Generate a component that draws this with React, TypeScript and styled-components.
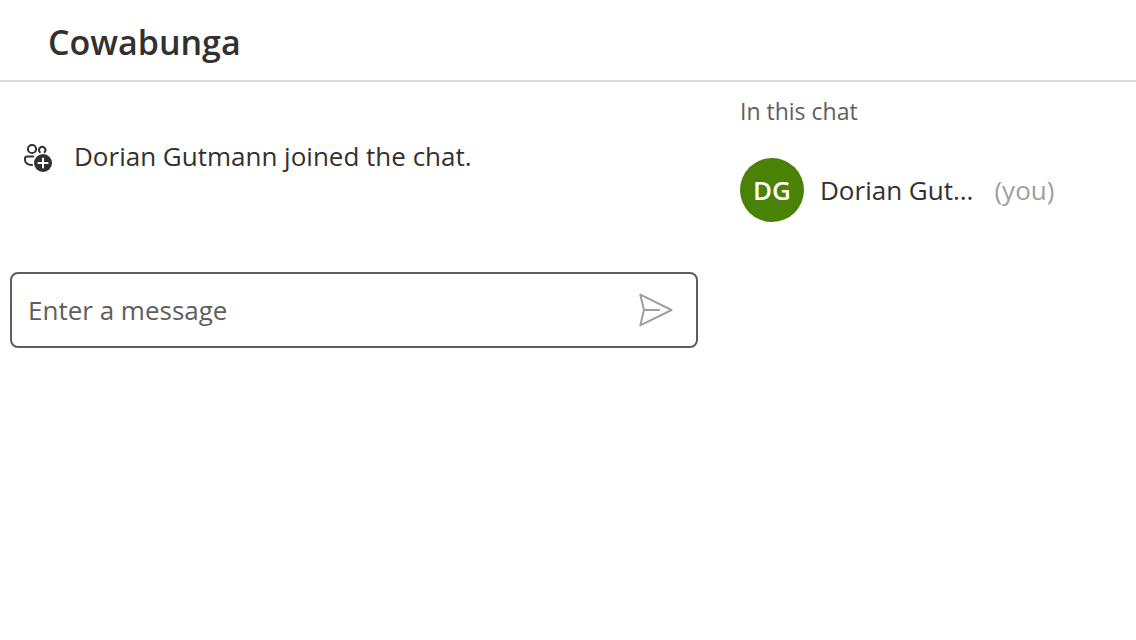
import React, { useState } from 'react';
import styled, { createGlobalStyle } from 'styled-components';

const GlobalStyle = createGlobalStyle`
  *, *::before, *::after {
    box-sizing: border-box;
  }
  body {
    margin: 0;
    background: #ffffff;
    color: #323130;
    font-family: 'Segoe UI', 'Open Sans', 'Noto Sans', sans-serif;
    font-size: 26px;
    line-height: 40px;
  }
`;

const Header = styled.header`
  padding: 18px 48px 14px;
  border-bottom: 2px solid #dcdcdc;
`;

const Title = styled.h1`
  margin: 0;
  font-size: 34px;
  font-weight: 600;
  line-height: 48px;
`;

const Content = styled.div`
  display: flex;
`;

const Conversation = styled.main`
  flex: 1;
  min-width: 0;
  padding: 54px 10px 0;
`;

const SystemMessage = styled.p`
  display: flex;
  align-items: center;
  gap: 22px;
  margin: 0 0 96px;
  padding-left: 14px;
`;

const Composer = styled.form`
  display: flex;
  align-items: center;
  height: 76px;
  padding: 0 18px 0 16px;
  border: 2px solid #605e5c;
  border-radius: 8px;
`;

const MessageInput = styled.input`
  flex: 1;
  min-width: 0;
  padding: 0;
  border: 0;
  outline: 0;
  background: transparent;
  color: #323130;
  font: inherit;

  &::placeholder {
    color: #605e5c;
    opacity: 1;
  }
`;

const SendButton = styled.button`
  display: flex;
  padding: 4px;
  border: 0;
  background: transparent;
  color: #a19f9d;
  cursor: pointer;
`;

const Sidebar = styled.aside`
  width: 428px;
  padding: 13px 32px 0;
`;

const SidebarTitle = styled.h2`
  margin: 0 0 31px;
  color: #605e5c;
  font-size: 23px;
  font-weight: 400;
  line-height: 32px;
`;

const ParticipantList = styled.ul`
  margin: 0;
  padding: 0;
  list-style: none;
`;

const Participant = styled.li`
  display: flex;
  align-items: center;
`;

const Avatar = styled.span`
  display: flex;
  flex: none;
  align-items: center;
  justify-content: center;
  width: 64px;
  height: 64px;
  margin-right: 16px;
  border-radius: 50%;
  background: #498205;
  color: #ffffff;
  font-weight: 600;
`;

const ParticipantName = styled.span`
  margin-right: 21px;
  white-space: nowrap;
`;

const You = styled.span`
  color: #a19f9d;
`;

function PeopleAddIcon() {
  return (
    <svg width="28" height="32" viewBox="0 -4 28 32" fill="none" aria-hidden="true">
      <g stroke="#323130" strokeWidth="2" strokeLinecap="round">
        <circle cx="8" cy="5" r="4.1" />
        <path d="M15.8 8.2A3.2 3.2 0 1 1 20.6 8.2" />
        <path d="M9.2 12.6H3.2Q1 12.6 1 14.8V16Q1.2 20.6 8 21" />
      </g>
      <circle cx="19" cy="19" r="9" fill="#323130" />
      <path d="M19 14.4V23.6M14.4 19H23.6" stroke="#ffffff" strokeWidth="2" strokeLinecap="round" />
    </svg>
  );
}

function SendIcon() {
  return (
    <svg width="36" height="36" viewBox="0 0 36 36" fill="none" aria-hidden="true">
      <path
        d="M2.3 2.7L33.6 18L2.3 33.3L6 18ZM6 18H22"
        stroke="currentColor"
        strokeWidth="2"
        strokeLinejoin="round"
      />
    </svg>
  );
}

export default function App() {
  const [message, setMessage] = useState('');

  return (
    <>
      <GlobalStyle />
      <Header>
        <Title>Cowabunga</Title>
      </Header>
      <Content>
        <Conversation>
          <SystemMessage>
            <PeopleAddIcon />
            <span>Dorian Gutmann joined the chat.</span>
          </SystemMessage>
          <Composer onSubmit={(event) => event.preventDefault()}>
            <MessageInput
              type="text"
              aria-label="Enter a message"
              placeholder="Enter a message"
              value={message}
              onChange={(event) => setMessage(event.target.value)}
            />
            <SendButton type="submit" aria-label="Send message">
              <SendIcon />
            </SendButton>
          </Composer>
        </Conversation>
        <Sidebar>
          <SidebarTitle>In this chat</SidebarTitle>
          <ParticipantList>
            <Participant>
              <Avatar>DG</Avatar>
              <ParticipantName>Dorian Gut...</ParticipantName>
              <You>(you)</You>
            </Participant>
          </ParticipantList>
        </Sidebar>
      </Content>
    </>
  );
}
